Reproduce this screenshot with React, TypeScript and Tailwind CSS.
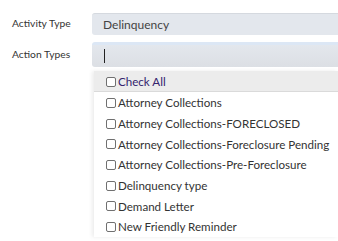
const options = [
  "Attorney Collections",
  "Attorney Collections-FORECLOSED",
  "Attorney Collections-Foreclosure Pending",
  "Attorney Collections-Pre-Foreclosure",
  "Delinquency type",
  "Demand Letter",
  "New Friendly Reminder",
];

function Box() {
  return (
    <span className="inline-block w-[10px] h-[10px] border border-[#707070] rounded-[2px] bg-white mr-[2px] shrink-0" />
  );
}

export default function App() {
  return (
    <div
      className="w-[338px] h-[241px] overflow-hidden bg-white pt-[13px] text-[#333]"
      style={{ fontFamily: "Lato, 'Noto Sans', sans-serif" }}
    >
      <div className="flex items-center h-[22px]">
        <div className="w-[92px] pl-[12px] text-[10.3px]">Activity Type</div>
        <div className="flex-1 h-full bg-[#e3e7ed] border-t border-[#d5d9df] rounded-l-[3px] flex items-center pl-[11px] text-[12px] text-[#444]">
          Delinquency
        </div>
      </div>
      <div className="flex items-center h-[25px] mt-[7px]">
        <div className="w-[92px] pl-[12px] text-[10.3px]">Action Types</div>
        <div className="flex-1 h-full rounded-l-[3px] border-t-[3px] border-[#dce7f5] bg-gradient-to-b from-[#e3e7ed] to-[#dcdfe4] flex items-center pl-[12px]">
          <span className="w-px h-[14px] bg-[#222]" />
        </div>
      </div>
      <div className="ml-[94px] mt-[4px] bg-white shadow-[-2px_0_4px_rgba(0,0,0,0.08)] text-[11.6px]">
        <div className="h-[21px] bg-[#ececec] border-b border-[#dadada] flex items-center pl-[12px] pt-[1px] text-[#34246e]">
          <Box />
          Check All
        </div>
        {options.map((o) => (
          <div key={o} className="h-[20.7px] flex items-center pl-[12px] pt-[1px] whitespace-nowrap">
            <Box />
            {o}
          </div>
        ))}
      </div>
    </div>
  );
}
